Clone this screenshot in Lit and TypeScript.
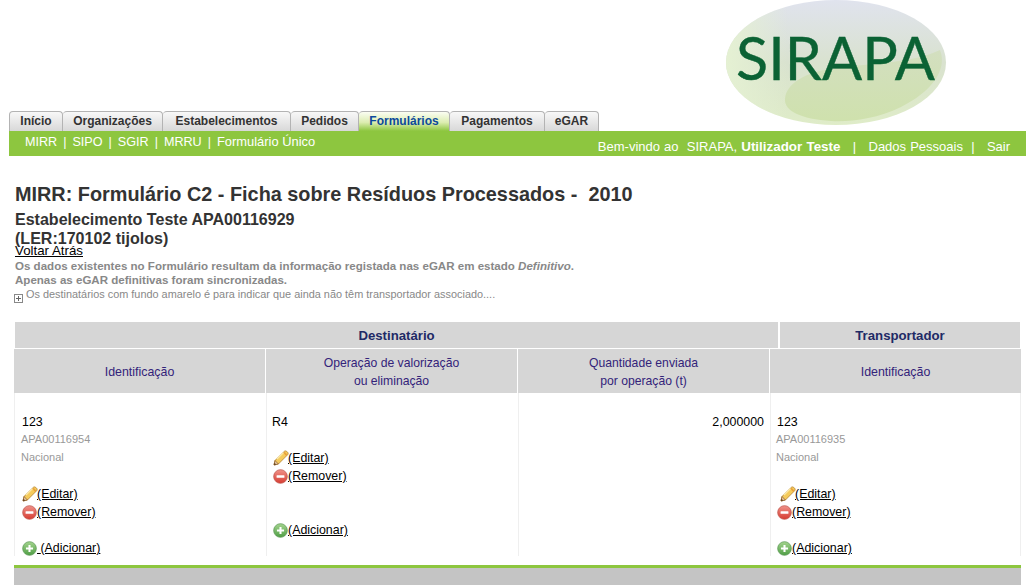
import { LitElement, html, css, svg } from "lit";
import { customElement } from "lit/decorators.js";

const pencil = html`<svg class="ic pen" width="16" height="16" viewBox="0 0 16 16"><path d="M1 15 L2 10.5 L11.5 1.2 Q12.5 .6 13.5 1.2 L15 2.8 Q15.4 3.8 14.8 4.6 L5.4 14 Z" fill="#f5cb5c" stroke="#b5822b" stroke-width=".8"/><path d="M11 2.4 L13.8 5.4" stroke="#e9a13b" stroke-width="1.6"/><path d="M4 9 L10.5 2.6" stroke="#fbe9a8" stroke-width="1.2"/><path d="M1 15 L2 10.5 L5.4 14 Z" fill="#e8c9a0" stroke="#8a5a2b" stroke-width=".7"/><path d="M1 15 L1.5 12.8 L3.2 14.5 Z" fill="#5b3a1c"/></svg>`;
const minus = html`<svg class="ic" width="16" height="16" viewBox="0 0 16 16"><defs><linearGradient id="r" x1="0" y1="0" x2="0" y2="1"><stop offset="0" stop-color="#f0938a"/><stop offset="1" stop-color="#d63c32"/></linearGradient></defs><circle cx="8" cy="8" r="7.3" fill="url(#r)" stroke="#c0574e" stroke-width=".8"/><rect x="3.8" y="6.6" width="8.4" height="2.8" rx=".6" fill="#fff"/></svg>`;
const plus = html`<svg class="ic" width="16" height="16" viewBox="0 0 16 16"><defs><linearGradient id="g" x1="0" y1="0" x2="0" y2="1"><stop offset="0" stop-color="#a4d48e"/><stop offset="1" stop-color="#4f9e45"/></linearGradient></defs><circle cx="8" cy="8" r="7.3" fill="url(#g)" stroke="#5c9a55" stroke-width=".8"/><path d="M6.9 4.2h2.2v2.7h2.7v2.2H9.1v2.7H6.9V9.1H4.2V6.9h2.7z" fill="#fff"/></svg>`;

const logo = svg`<svg class="logo" width="222" height="126" viewBox="0 0 222 126">
  <defs>
    <linearGradient id="lg" x1="0" y1="0" x2="0" y2="1"><stop offset="0" stop-color="#e0e3ee"/><stop offset=".5" stop-color="#d9e2cf"/><stop offset="1" stop-color="#dfecc8"/></linearGradient>
    <linearGradient id="lg2" x1="0" y1="0" x2="1" y2="0"><stop offset="0" stop-color="#e5f1d3"/><stop offset=".28" stop-color="#e5f1d3" stop-opacity="0"/></linearGradient>
    <linearGradient id="lg3" x1="0" y1="0" x2="0" y2="1"><stop offset="0" stop-color="#d3dfc0"/><stop offset="1" stop-color="#cfe1ad"/></linearGradient>
  </defs>
  <ellipse cx="110" cy="62.5" rx="110" ry="62.5" fill="url(#lg)"/>
  <ellipse cx="110" cy="62.5" rx="110" ry="62.5" fill="url(#lg2)"/>
  <path d="M59 99 C60 84 78 72 110 68 C150 63 190 62 214 50 C222 70 205 92 175 107 C150 119 125 122 105 121 C75 119 58 111 59 99 Z" fill="url(#lg3)"/>
  <text class="logotext" x="10" y="80" textLength="199" lengthAdjust="spacingAndGlyphs">SIRAPA</text>
</svg>`;

@customElement("app-root")
export class AppRoot extends LitElement {
  static styles = css`
    :host { display: block; width: 1034px; height: 585px; overflow: hidden; background: #fff;
      font-family: "Liberation Sans", Arial, sans-serif; font-size: 12.4px; color: #000; }
    a { color: inherit; }
    .top { display: flex; justify-content: space-between; height: 131px; padding: 0 86px 0 9px; }
    .tabs { display: grid; grid-template-columns: 54px 100px 128px 68px 91px 95px 54px; align-self: flex-end; }
    .tab { height: 20px; line-height: 19px; box-sizing: border-box; border: 1px solid #b3b3b3; border-bottom: 0;
      border-left: 0; border-radius: 4px 4px 0 0; background: linear-gradient(#f8f8f8, #d8d8d8); font-weight: bold; color: #333;
      text-align: center; font-size: 12px; }
    .tab.first { border-left: 1px solid #b3b3b3; }
    .tab.on { background: linear-gradient(#fbfdf3 0%, #dcedb0 55%, #8dc63f 100%); color: #0d4a9c; }
    .logo { display: block; }
    .logotext { font-family: Lato, "Liberation Sans", sans-serif; font-size: 60px; fill: #0b6234; stroke: #0b6234; stroke-width: .4px; }
    .bar { margin-left: 9px; width: 1017px; height: 25px; background: #8dc63f; color: #fff; display: flex;
      justify-content: space-between; box-sizing: border-box; padding: 0 16px 0 16px; }
    .sub { line-height: 22px; display: flex; gap: 6px; font-size: 12.6px; }
    .sub .long { font-size: 12.9px; }
    .user { line-height: 31px; white-space: pre; font-size: 13px; word-spacing: .5px; }
    .user b { font-size: 13.4px; }
    .content { padding: 0 13px 0 14px; }
    .head { padding-left: 1px; }
    h1 { margin: 28px 0 0; font-size: 19.85px; line-height: 21px; color: #333; font-weight: bold; white-space: pre; }
    h2 { margin: 5px 0 0; font-size: 16.05px; line-height: 19px; color: #333; font-weight: bold; }
    .back { display: block; line-height: 12px; font-size: 13.3px; margin-top: -3px; }
    .note { margin-top: 2px; font-size: 11.55px; line-height: 14px; font-weight: bold; color: #888; }
    .hint { display: flex; align-items: flex-end; font-size: 10.9px; line-height: 12px; color: #888; margin-top: 1px; }
    .hint svg { margin: 0 3px -3px -1px; flex: none; }
    .thead1 { display: grid; grid-template-columns: 763px 240px; column-gap: 2px; margin: 22px 0 0 1px; }
    .thead1 > div { background: #d6d6d6; height: 26px; line-height: 27px; text-align: center; font-weight: bold; color: #1f2a66; font-size: 13.2px; }
    .thead2 { display: grid; grid-template-columns: 251px 251px 251px 251px; column-gap: 1px; margin-top: 1px; }
    .thead2 > div { background: #d6d6d6; height: 44px; box-sizing: border-box; padding-top: 1px; display: flex; align-items: center; justify-content: center;
      text-align: center; line-height: 18px; color: #33237a; font-size: 12.2px; }
    .thead2 > .one { font-size: 12.4px; }
    .tbody { display: grid; grid-template-columns: 252px 252px 252px 251px; }
    .cell { background: #fff; height: 163px; box-sizing: border-box; padding: 20px 0 0 7px; line-height: 18px;
      border-left: 1px solid #efefef; }
    .cell:last-child { border-right: 1px solid #efefef; padding-left: 6px; }
    .cell.q { text-align: right; padding-right: 6px; }
    .cell.d { padding-left: 5px; }
    .tag { font-size: 11px; color: #999; margin-left: -1px; height: 18px; line-height: 16px; }
    .gap { height: 18px; }
    .row { display: flex; align-items: center; height: 18px; white-space: pre; }
    .row.nudge { padding-left: 1px; }
    .row.in { padding-left: 3px; }
    .ic { display: block; flex: none; width: 15px; height: 15px; }
    .ic.pen { width: 16px; height: 16px; margin-right: -1px; }
    .foot { margin: 9px 13px 0 14px; border-top: 3px solid #8dc63f; background: #c4c4c4; height: 40px; }
  `;

  private actions(indent = false, spaced = false) {
    return html`
      <div class="row ${indent ? "in" : ""}">${pencil}<a href="#">(Editar)</a></div>
      <div class="row">${minus}<a href="#">(Remover)</a></div>
      <div class="gap"></div>
      <div class="row">${plus}<a href="#">${spaced ? " " : ""}(Adicionar)</a></div>`;
  }

  render() {
    const tabs = ["Início", "Organizações", "Estabelecimentos", "Pedidos", "Formulários", "Pagamentos", "eGAR"];
    return html`
      <div class="top">
        <div class="tabs">
          ${tabs.map((t, i) => html`<div class="tab ${t === "Formulários" ? "on" : ""} ${i === 0 ? "first" : ""}">${t}</div>`)}
        </div>
        ${logo}
      </div>
      <div class="bar">
        <div class="sub"><span>MIRR</span><span>|</span><span>SIPO</span><span>|</span><span>SGIR</span><span>|</span><span>MRRU</span><span>|</span><span class="long">Formulário Único</span></div>
        <div class="user">Bem-vindo ao  SIRAPA, <b>Utilizador Teste</b>   |   Dados Pessoais  |   Sair</div>
      </div>
      <div class="content">
        <div class="head">
          <h1>MIRR: Formulário C2 - Ficha sobre Resíduos Processados -  2010</h1>
          <h2>Estabelecimento Teste APA00116929<br />(LER:170102 tijolos)</h2>
          <a class="back" href="#">Voltar Atrás</a>
          <div class="note">Os dados existentes no Formulário resultam da informação registada nas eGAR em estado <i>Definitivo</i>.<br />Apenas as eGAR definitivas foram sincronizadas.</div>
          <div class="hint">
            <svg width="9" height="9" viewBox="0 0 9 9"><rect x=".5" y=".5" width="8" height="8" fill="#fff" stroke="#888"/><path d="M2 4.5h5M4.5 2v5" stroke="#666"/></svg>
            <span>Os destinatários com fundo amarelo é para indicar que ainda não têm transportador associado....</span>
          </div>
        </div>
        <div class="thead1"><div>Destinatário</div><div>Transportador</div></div>
        <div class="thead2">
          <div class="one">Identificação</div>
          <div>Operação de valorização<br />ou eliminação</div>
          <div>Quantidade enviada<br />por operação (t)</div>
          <div class="one">Identificação</div>
        </div>
        <div class="tbody">
          <div class="cell">
            <div>123</div><div class="tag">APA00116954</div><div class="tag">Nacional</div><div class="gap"></div>
            ${this.actions(false, true)}
          </div>
          <div class="cell d">
            <div>R4</div><div class="gap"></div>
            <div class="row nudge">${pencil}<a href="#">(Editar)</a></div>
            <div class="row nudge">${minus}<a href="#">(Remover)</a></div>
            <div class="gap"></div><div class="gap"></div>
            <div class="row nudge">${plus}<a href="#">(Adicionar)</a></div>
          </div>
          <div class="cell q">2,000000</div>
          <div class="cell">
            <div>123</div><div class="tag">APA00116935</div><div class="tag">Nacional</div><div class="gap"></div>
            ${this.actions(true)}
          </div>
        </div>
      </div>
      <div class="foot"></div>
    `;
  }
}
